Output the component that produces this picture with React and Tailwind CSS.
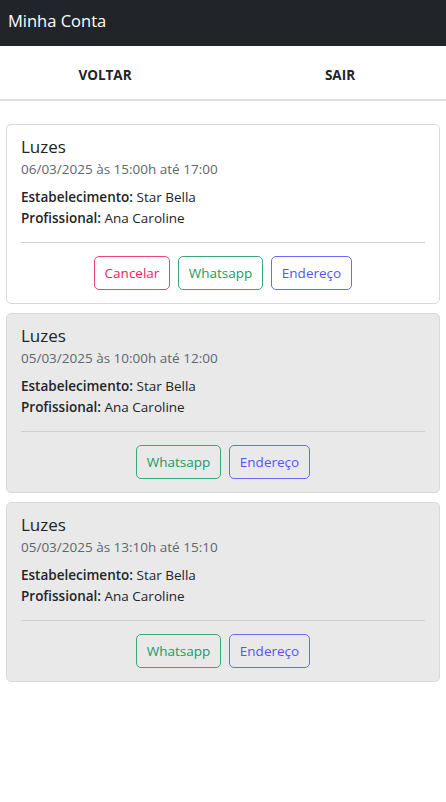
import React from "react";

const font = { fontFamily: '"Open Sans", "Noto Sans", sans-serif' };

function Card({ date, gray, cancel }) {
  return (
    <div
      className={`mx-[6px] rounded-[5px] border border-[#d9d9d9] px-[14px] pt-[11px] pb-[13px] ${
        gray ? "bg-[#e9e9e9]" : "bg-white"
      }`}
    >
      <div className="text-[17px] leading-[22px] text-[#212529]">Luzes</div>
      <div className="text-[13.5px] leading-[22px] text-[#5f666d]">{date}</div>
      <div className="mt-[7px] text-[13.5px] leading-[21px] text-[#212529]">
        <div>
          <span className="font-semibold">Estabelecimento:</span> Star Bella
        </div>
        <div>
          <span className="font-semibold">Profissional:</span> Ana Caroline
        </div>
      </div>
      <div className="mt-[13px] border-t border-[#cfcfcf]" />
      <div className="mt-[13px] flex justify-center gap-[8px]">
        {cancel && (
          <button className="h-[34px] w-[76px] rounded-[5px] border border-[#f0456f] text-[13.5px] text-[#f0245f]">
            Cancelar
          </button>
        )}
        <button className="h-[34px] w-[85px] rounded-[5px] border border-[#3aa878] text-[13.5px] text-[#1a9a62]">
          Whatsapp
        </button>
        <button className="h-[34px] w-[81px] rounded-[5px] border border-[#6a6aff] text-[13.5px] text-[#5555f5]">
          Endereço
        </button>
      </div>
    </div>
  );
}

export default function App() {
  return (
    <div className="min-h-[802px] bg-white" style={font}>
      <div className="flex h-[46px] items-center bg-[#212529] px-[8px] pb-[4px] text-[16.5px] text-white">
        Minha Conta
      </div>
      <div className="flex h-[55px] items-center border-b-2 border-[#dedede] pt-[5px] text-[13.5px] font-bold text-[#212529]">
        <div className="flex w-[210px] shrink-0 justify-center">VOLTAR</div>
        <div className="flex w-[236px] shrink-0 justify-center pl-[24px]">SAIR</div>
      </div>
      <div className="flex flex-col gap-[9px] pt-[23px]">
        <Card date="06/03/2025 às 15:00h até 17:00" cancel />
        <Card date="05/03/2025 às 10:00h até 12:00" gray />
        <Card date="05/03/2025 às 13:10h até 15:10" gray />
      </div>
    </div>
  );
}
